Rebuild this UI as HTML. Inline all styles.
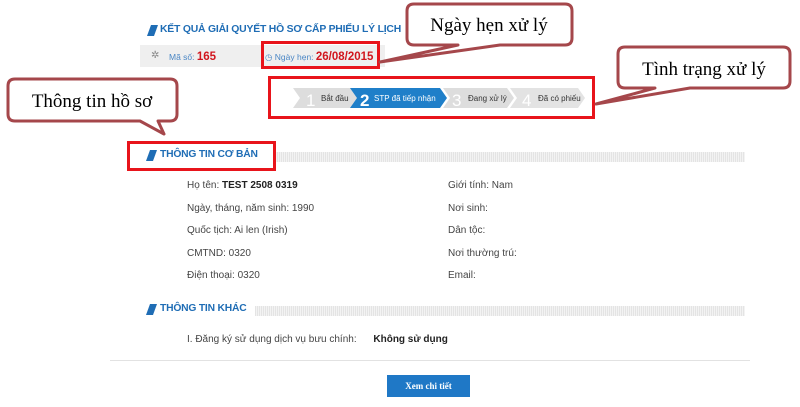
<!DOCTYPE html><html><head><meta charset="utf-8"><style>
body{margin:0;width:800px;height:407px;background:#fff;position:relative;overflow:hidden;font-family:"Liberation Sans",Arial,sans-serif}
.a{position:absolute;white-space:nowrap}
.dots{position:absolute;height:10px;background:repeating-linear-gradient(90deg,#e4e4e4 0 1px,#f3f3f3 1px 2px)}
.h{color:#1f6db5;font-weight:bold;font-size:10.3px;letter-spacing:-0.2px}
.sl{position:absolute;width:7px;height:11px;background:#1f6db5;transform:skewX(-20deg)}
.t{font-size:10px;color:#444}
.rb{position:absolute;border:3px solid #e8141b;box-sizing:border-box}
</style></head><body>
<div class="sl" style="left:149px;top:25px"></div>
<div class="a h" style="left:160px;top:24px;font-size:10.4px;letter-spacing:-0.2px">KẾT QUẢ GIẢI QUYẾT HỒ SƠ CẤP PHIẾU LÝ LỊCH</div>
<div class="a" style="left:140px;top:45px;width:245px;height:22px;background:#efefef"></div>
<div class="a" style="left:151px;top:50px;font-size:10px;color:#888;line-height:12px">✲</div>
<div class="a" style="left:169px;top:50px;font-size:8.5px;color:#4a86c5;line-height:14px">Mã số: <b style="color:#d1161e;font-size:11.5px">165</b></div>
<div class="a" style="left:265px;top:50px;font-size:8.5px;color:#4a86c5;line-height:14px">◷ Ngày hẹn: <b style="color:#d1161e;font-size:11.5px">26/08/2015</b></div>
<div class="rb" style="left:261px;top:41px;width:119px;height:28px"></div>
<svg class="a" style="left:290px;top:86px" width="300" height="24">
<polygon points="3,2 63,2 70,12 63,22 3,22 10,12" fill="#ddd"/>
<polygon points="60,2 150,2 157,12 150,22 60,22 67,12" fill="#1f7fc9"/>
<polygon points="153,2 217,2 224,12 217,22 153,22 160,12" fill="#ddd"/>
<polygon points="220,2 288,2 295,12 288,22 220,22 227,12" fill="#e3e3e3"/>
<text x="16" y="20" font-size="17" fill="#fff" font-family="Liberation Sans">1</text>
<text x="31" y="15" font-size="8" fill="#333" font-family="Liberation Sans">Bắt đầu</text>
<text x="70" y="20" font-size="17" fill="#fff" font-weight="bold" font-family="Liberation Sans">2</text>
<text x="84" y="15" font-size="8" fill="#fff" font-family="Liberation Sans">STP đã tiếp nhận</text>
<text x="162" y="20" font-size="17" fill="#fff" font-family="Liberation Sans">3</text>
<text x="178" y="15" font-size="8" fill="#333" font-family="Liberation Sans">Đang xử lý</text>
<text x="232" y="20" font-size="17" fill="#fff" font-family="Liberation Sans">4</text>
<text x="248" y="15" font-size="8" fill="#333" font-family="Liberation Sans">Đã có phiếu</text>
</svg>
<div class="rb" style="left:268px;top:76px;width:327px;height:43px"></div>
<div class="sl" style="left:148px;top:150px"></div>
<div class="a h" style="left:160px;top:149px">THÔNG TIN CƠ BẢN</div>
<div class="dots" style="left:275px;top:152px;width:470px"></div>
<div class="rb" style="left:127px;top:141px;width:149px;height:30px"></div>
<div class="a t" style="left:187px;top:180px">Họ tên: <b style="color:#222">TEST 2508 0319</b></div>
<div class="a t" style="left:187px;top:203px">Ngày, tháng, năm sinh: 1990</div>
<div class="a t" style="left:187px;top:225px">Quốc tịch: Ai len (Irish)</div>
<div class="a t" style="left:187px;top:248px">CMTND: 0320</div>
<div class="a t" style="left:187px;top:270px">Điện thoại: 0320</div>
<div class="a t" style="left:448px;top:180px">Giới tính: Nam</div>
<div class="a t" style="left:448px;top:203px">Nơi sinh:</div>
<div class="a t" style="left:448px;top:225px">Dân tộc:</div>
<div class="a t" style="left:448px;top:248px">Nơi thường trú:</div>
<div class="a t" style="left:448px;top:270px">Email:</div>
<div class="sl" style="left:148px;top:304px"></div>
<div class="a h" style="left:160px;top:303px">THÔNG TIN KHÁC</div>
<div class="dots" style="left:255px;top:306px;width:490px"></div>
<div class="a t" style="left:187px;top:334px">I. Đăng ký sử dụng dịch vụ bưu chính: <b style="margin-left:14px;color:#222">Không sử dụng</b></div>
<div class="a" style="left:110px;top:360px;width:640px;height:1px;background:#e2e2e2"></div>
<div class="a" style="left:387px;top:375px;width:83px;height:22px;background:#1f78c6;color:#fff;font-family:'Liberation Serif',serif;font-size:9px;font-weight:bold;text-align:center;line-height:22px">Xem chi tiết</div>
<svg class="a" style="left:0;top:0" width="800" height="407">
<g fill="#fff" stroke="#a5474b" stroke-width="3" stroke-linejoin="round">
<path d="M414,4 H565 Q572,4 572,11 V38 Q572,45 565,45 H500 L380,62 L458,45 H414 Q407,45 407,38 V11 Q407,4 414,4 Z"/>
<path d="M625,47 H783 Q790,47 790,54 V81 Q790,88 783,88 H690 L596,104 L655,88 H625 Q618,88 618,81 V54 Q618,47 625,47 Z"/>
<path d="M15,79 H170 Q177,79 177,86 V114 Q177,121 170,121 H158 L164,134 L140,121 H15 Q8,121 8,114 V86 Q8,79 15,79 Z"/>
</g>
<text x="489" y="31" text-anchor="middle" font-family="Liberation Serif" font-size="19">Ngày hẹn xử lý</text>
<text x="704" y="75" text-anchor="middle" font-family="Liberation Serif" font-size="19">Tình trạng xử lý</text>
<text x="92" y="107" text-anchor="middle" font-family="Liberation Serif" font-size="19">Thông tin hồ sơ</text>
</svg>
</body></html>
